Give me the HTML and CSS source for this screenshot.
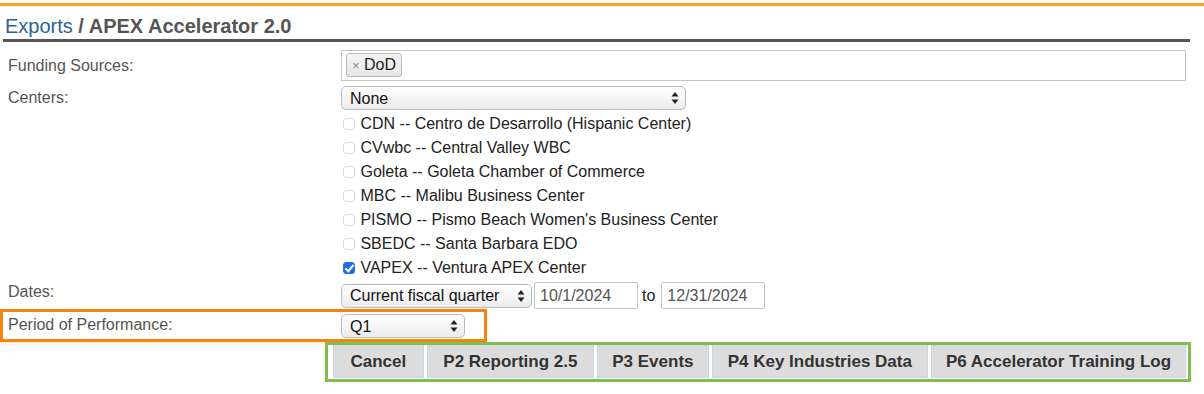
FILE: index.html
```html
<!DOCTYPE html>
<html lang="en">
<head>
    <meta charset="UTF-8">
    <meta name="viewport" content="width=device-width, initial-scale=1.0">
    <title>Exports - APEX Accelerator 2.0</title>
    <link rel="stylesheet" href="styles.css">
</head>
<body>
    <div class="topbar"></div>
    <div class="page">
        <h1 class="title"><a href="#">Exports</a> / APEX Accelerator 2.0</h1>

        <form id="export-form">
            <div class="row row-funding">
                <label class="label">Funding Sources:</label>
                <div class="tagbox">
                    <span class="tag"><span class="tag-x">&times;</span> DoD</span>
                </div>
            </div>

            <div class="row row-centers">
                <label class="label" for="centers">Centers:</label>
                <div class="field">
                    <span class="select-wrap sel-centers">
                        <select id="centers"><option>None</option></select>
                        <svg class="arrows" width="8" height="14" viewBox="0 0 8 14"><path d="M4 1 L7.5 5.5 H0.5 Z M4 13 L7.5 8.5 H0.5 Z" fill="#222"/></svg>
                    </span>
                    <ul class="checks">
                        <li><label><input type="checkbox"> CDN -- Centro de Desarrollo (Hispanic Center)</label></li>
                        <li><label><input type="checkbox"> CVwbc -- Central Valley WBC</label></li>
                        <li><label><input type="checkbox"> Goleta -- Goleta Chamber of Commerce</label></li>
                        <li><label><input type="checkbox"> MBC -- Malibu Business Center</label></li>
                        <li><label><input type="checkbox"> PISMO -- Pismo Beach Women's Business Center</label></li>
                        <li><label><input type="checkbox"> SBEDC -- Santa Barbara EDO</label></li>
                        <li><label><input type="checkbox" checked> VAPEX -- Ventura APEX Center</label></li>
                    </ul>
                </div>
            </div>

            <div class="row row-dates">
                <label class="label">Dates:</label>
                <div class="field dates">
                    <span class="select-wrap sel-dates">
                        <select><option>Current fiscal quarter</option></select>
                        <svg class="arrows" width="8" height="14" viewBox="0 0 8 14"><path d="M4 1 L7.5 5.5 H0.5 Z M4 13 L7.5 8.5 H0.5 Z" fill="#222"/></svg>
                    </span>
                    <input class="date" type="text" value="10/1/2024">
                    <span class="to">to</span>
                    <input class="date" type="text" value="12/31/2024">
                </div>
            </div>

            <div class="row row-period">
                <label class="label">Period of Performance:</label>
                <div class="field">
                    <span class="select-wrap sel-period">
                        <select><option>Q1</option></select>
                        <svg class="arrows" width="8" height="14" viewBox="0 0 8 14"><path d="M4 1 L7.5 5.5 H0.5 Z M4 13 L7.5 8.5 H0.5 Z" fill="#222"/></svg>
                    </span>
                </div>
            </div>

            <div class="actions">
                <button type="button" class="btn btn-cancel">Cancel</button>
                <button type="button" class="btn btn-p2">P2 Reporting 2.5</button>
                <button type="button" class="btn btn-p3">P3 Events</button>
                <button type="button" class="btn btn-p4">P4 Key Industries Data</button>
                <button type="button" class="btn btn-p6">P6 Accelerator Training Log</button>
            </div>
        </form>
    </div>
</body>
</html>
```

FILE: styles.css
```css
body {
    margin: 0;
    font-family: "Liberation Sans", Arial, sans-serif;
    background-color: #fff;
    color: #222;
}
.topbar {
    height: 3px;
    margin-top: 3px;
    background-color: #f9a51a;
}
.page {
    width: 1190px;
}
.title {
    margin: 0 0 0 3px;
    padding: 9px 0 2px 2px;
    font-size: 20px;
    font-weight: bold;
    color: #555;
    border-bottom: 3px solid #555;
    line-height: 22px;
}
.title a {
    color: #2a6496;
    text-decoration: none;
    font-weight: normal;
}
.row {
    display: grid;
    grid-template-columns: 333px 1fr;
    padding-left: 8px;
}
.label {
    color: #555;
    font-size: 16px;
    line-height: 24px;
}
.row-funding {
    margin-top: 8px;
    align-items: center;
}
.tagbox {
    height: 31px;
    box-sizing: border-box;
    margin-right: 4px;
    border: 1px solid #c4c4c4;
    padding: 2px 4px;
}
.tag {
    display: inline-block;
    height: 24px;
    box-sizing: border-box;
    padding: 0 5px;
    border: 1px solid #bbb;
    border-radius: 3px;
    background: linear-gradient(#f4f4f4, #e6e6e6);
    font-size: 16px;
    line-height: 22px;
    color: #222;
}
.tag-x {
    font-size: 13px;
    color: #888;
}
.row-centers {
    margin-top: 5px;
}
.select-wrap {
    position: relative;
    display: inline-block;
}
.select-wrap select {
    -webkit-appearance: none;
    appearance: none;
    height: 24px;
    box-sizing: border-box;
    width: 100%;
    border: 1px solid #b9b9b9;
    border-radius: 5px;
    background: linear-gradient(#ffffff, #ececec);
    font-family: inherit;
    font-size: 16px;
    color: #111;
    padding: 0 20px 0 8px;
    display: block;
}
.select-wrap .arrows {
    position: absolute;
    right: 7px;
    top: 5px;
    pointer-events: none;
}
.sel-centers {
    width: 345px;
}
.sel-dates {
    width: 191px;
}
.sel-period {
    width: 124px;
}
.checks {
    list-style: none;
    margin: 2px 0 0 0;
    padding: 0;
}
.checks li {
    height: 24px;
    line-height: 24px;
    font-size: 16px;
    color: #222;
}
.checks input {
    -webkit-appearance: none;
    appearance: none;
    width: 12px;
    height: 12px;
    margin: 0 1px 0 2px;
    border: 1px solid #d6d6d6;
    border-radius: 3px;
    background: #fff;
    vertical-align: -1px;
}
.checks input:checked {
    border-color: #1f6fe0;
    background-color: #1f6fe0;
    position: relative;
}
.checks input:checked::after {
    content: "";
    position: absolute;
    left: 3px;
    top: 0;
    width: 3px;
    height: 7px;
    border: solid #fff;
    border-width: 0 2px 2px 0;
    transform: rotate(40deg);
}
.row-dates {
    margin-top: 2px;
    height: 27px;
}
.row-dates .label {
    line-height: 18px;
    padding-top: 1px;
}
.dates {
    display: flex;
    align-items: center;
}
.date {
    height: 27px;
    box-sizing: border-box;
    width: 104px;
    margin-left: 2px;
    border: 1px solid #c4c4c4;
    border-radius: 2px;
    padding: 0 5px;
    font-family: inherit;
    font-size: 16px;
    color: #555;
}
.to {
    margin: 0 4px;
    font-size: 16px;
}
.row-period {
    width: 476px;
    padding: 2px 0 0 5px;
    height: 25px;
    border: 3px solid #f7830f;
    box-shadow: 0 3px 4px rgba(247, 131, 15, 0.12);
}
.row-period .label {
    line-height: 22px;
}
.actions {
    display: flex;
    gap: 3px;
    margin: 0 0 0 325px;
    padding: 0 2px 0 5px;
    width: 853px;
    height: 34px;
    border: 3px solid #82bd4e;
    box-shadow: 0 3px 4px rgba(130, 189, 78, 0.12);
}
.btn {
    height: 33px;
    border: 1px solid #c9d6e4;
    background-color: #dcdcdc;
    color: #333;
    font-family: inherit;
    font-weight: bold;
    font-size: 17px;
    padding: 0;
    cursor: pointer;
}
.btn-cancel { width: 91px; }
.btn-p2 { width: 168px; }
.btn-p3 { width: 112px; }
.btn-p4 { width: 217px; }
.btn-p6 { width: 256px; }
```
